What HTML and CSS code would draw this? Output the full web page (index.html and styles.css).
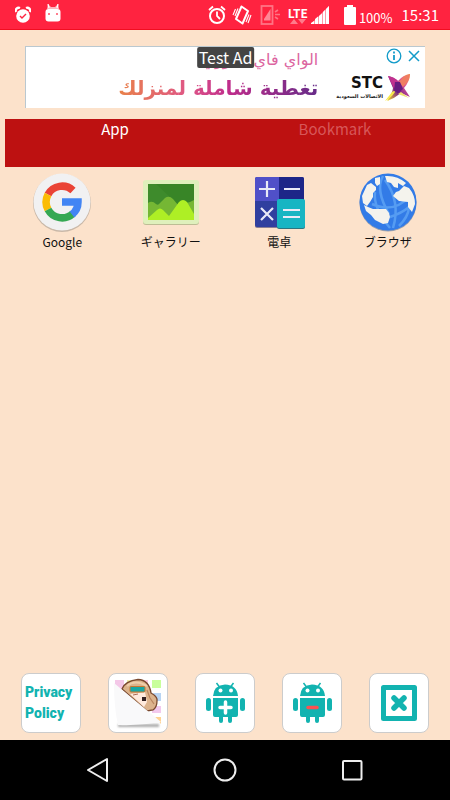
FILE: index.html
```html
<!DOCTYPE html>
<html lang="ja">
<head>
<meta charset="utf-8">
<meta name="viewport" content="width=device-width, initial-scale=1">
<title>Launcher</title>
<link rel="stylesheet" href="styles.css">
</head>
<body>
<header class="status">
  <svg class="s-alarm" viewBox="0 0 16 18" width="16" height="18"><circle cx="8" cy="10" r="6.8" fill="#fff"/><path d="M1 6 A3 3 0 0 1 5 2M15 6 A3 3 0 0 0 11 2" stroke="#fff" stroke-width="2.4" fill="none"/><path d="M5 10l2 2 4-4" stroke="#ff2340" stroke-width="1.4" fill="none"/></svg>
  <svg class="s-cat" viewBox="0 0 16 18" width="16" height="18"><path d="M2 5L3 0l3 3h4l3-3 1 5z" fill="#ffb3bd"/><path d="M3 0l1 4M13 0l-1 4" stroke="#fff" stroke-width="1.2"/><rect x=".5" y="5" width="15" height="12.5" rx="3" fill="#fff"/><path d="M3 10h2M11 10h2" stroke="#ff5268" stroke-width="1.6"/></svg>
  <div class="status-right">
    <svg class="s-ring" viewBox="0 0 18 20" width="18" height="20" fill="none" stroke="#fff"><circle cx="9" cy="11" r="7" stroke-width="2"/><path d="M9 6.5V11l3 3M1 5l4-3.500M17 5l-4-3.500" stroke-width="1.8"/></svg>
    <svg class="s-vibrate" viewBox="0 0 20 20" width="20" height="20" fill="none" stroke="#fff"><path d="M9.500 1.500l6.500 4.500-5.500 12.500L4 14z" stroke-width="2" stroke-linejoin="round"/><path d="M3.500 4L1 10M6 3.500L3 11M19 10l-3 8M17 9.500l-3 7.500" stroke-width="1.100"/></svg>
    <svg class="s-phone" viewBox="0 0 20 20" width="20" height="20" fill="none" stroke="#ff7384"><rect x="1.500" y="1" width="11" height="18" stroke-width="1.800"/><path d="M4 15.500V14L10.500 4v11.500z" fill="#ff8795" stroke="none"/><path d="M15 7l3-2M15 9.500h5M15 12l3 2" stroke-width="1.600"/></svg>
    <div class="lte"><span>LTE</span><svg viewBox="0 0 16 5" width="16" height="5" fill="#ff7b8b"><path d="M0 5l4-5 4 5zM8 0h8l-4 5z"/></svg></div>
    <svg class="s-signal" viewBox="0 0 18 18" width="18" height="18"><path d="M0 18L18 0v18z" fill="#ff9aa7"/><path d="M0 18v-1l3-2v3zM4 18v-5l3-2.500V18zM8 18v-8l3-2.500V18zM12 18V6l2-2v14zM15 18V3l3-3v18z" fill="#fff"/></svg>
    <svg class="s-battery" viewBox="0 0 12 20" width="12" height="20" fill="#fff"><path d="M3 0h6v2h2q1 0 1 1v16q0 1-1 1H1q-1 0-1-1V3q0-1 1-1h2z"/></svg>
    <span class="percent">100%</span>
    <time class="clock">15:31</time>
  </div>
</header>

<main class="main">
  <section class="ad" aria-label="Ad">
    <div class="ad-copy" lang="ar" dir="rtl">
      <p class="ad-top">الواي فاي الفوري</p>
      <p class="ad-bottom">تغطية شاملة لمنزلك</p>
    </div>
    <div class="brand">
      <div class="brand-text"><strong>STC</strong><small lang="ar" dir="rtl">الاتصالات السعودية</small></div>
      <svg viewBox="0 0 32 34" width="32" height="34">
        <defs>
          <linearGradient id="flare" x1="1" y1="0" x2="0" y2="1"><stop offset="0" stop-color="#f7a53d"/><stop offset=".3" stop-color="#e0559a"/><stop offset=".6" stop-color="#782285"/><stop offset="1" stop-color="#f8e326"/></linearGradient>
          <filter id="soft" x="-30%" y="-30%" width="160%" height="160%"><feGaussianBlur stdDeviation=".7"/></filter>
        </defs>
        <g filter="url(#soft)"><path d="M5 6q6 1 10 5 5-6 12-7 0 7-6 14l6 9-9-4q-6 5-14 8 5-6 6-13z" fill="url(#flare)"/><path d="M5 6q6 1 10 5l-4 8z" fill="#c0308f"/><path d="M13 20q-3 7-11 11l7-9z" fill="#f6e94b"/><path d="M16 12q5-7 11-8-1 8-7 13z" fill="#ef7d63"/><path d="M12 12l5 0 3 7-5 4-4-2z" fill="#661d80"/><path d="M18 22l8 6-11-4z" fill="#efdf6e"/></g>
      </svg>
    </div>
    <span class="ad-badge">Test Ad</span>
    <div class="ad-tools">
      <button aria-label="Ad information"><svg viewBox="0 0 16 16" width="16" height="16" fill="none" stroke="#129bc9"><circle cx="8" cy="8" r="6.800" stroke-width="1.300"/><path d="M8 7v5M8 3.500v2" stroke-width="1.800"/></svg></button>
      <button aria-label="Close ad"><svg viewBox="0 0 16 16" width="16" height="16" fill="none" stroke="#129bc9"><path d="M3 3l10 10M13 3L3 13" stroke-width="1.500"/></svg></button>
    </div>
  </section>

  <nav class="tabs">
    <button class="tab tab-active">App</button>
    <button class="tab">Bookmark</button>
  </nav>

  <section class="apps">
    <a class="app" href="#google">
      <svg viewBox="0 0 60 60" width="60" height="60"><circle cx="30" cy="31" r="29" fill="#c9b8a8"/><circle cx="30" cy="30" r="28.500" fill="#f1f1f2"/>
        <g fill="none" stroke-width="7.500"><path d="M41 18.500A16 16 0 0 0 16 22.500" stroke="#ea4335"/><path d="M16 22.500a16 16 0 0 0 0 15" stroke="#fbbc05"/><path d="M16 37.500A16 16 0 0 0 41 41.500" stroke="#34a853"/><path d="M40 42.500A16 16 0 0 0 46 30H30" stroke="#4285f4" stroke-linejoin="miter"/></g></svg>
      <span>Google</span>
    </a>
    <a class="app" href="#gallery">
      <svg viewBox="0 0 60 60" width="60" height="60"><rect x="2" y="9" width="56" height="44" rx="3" fill="#bdbd95"/><rect x="2" y="8" width="56" height="44" rx="3" fill="#dff0bc"/><path d="M7 12h46v36H7z" fill="#388527"/><path d="M7 12h8l38 36H7z" fill="#438f30" opacity=".6"/><path d="M7 31q4-3 8 1 2 2 4-1l5-5q4-3 8 1l5 6 12-3 4-2v20H7z" fill="#75b734"/><path d="M7 48v-2l9-8q3-3 6 0l6 6 10-14q4-4 8 0l7 12v6z" fill="#aeef25"/></svg>
      <span>ギャラリー</span>
    </a>
    <a class="app" href="#calculator">
      <svg viewBox="0 0 60 60" width="60" height="60"><rect x="6" y="6" width="49" height="50" rx="2" fill="#8b7e93"/><rect x="6" y="5" width="49" height="50" rx="2" fill="#303f9f"/><path d="M30 5h23q2 0 2 2v22H30z" fill="#1d2688"/><path d="M8 5h22v24H6V7q0-2 2-2z" fill="#5050c8"/><rect x="28" y="28" width="28" height="29" rx="2" fill="#2c757f"/><rect x="28" y="27" width="28" height="29" rx="2" fill="#17b5c3"/><g fill="none" stroke="#e9eaf7" stroke-width="2.200"><path d="M10 17h16M18 9v16M35 17h16M12 36l12 12M24 36L12 48M34 38h17M34 45h17"/></g></svg>
      <span>電卓</span>
    </a>
    <a class="app" href="#browser">
      <svg viewBox="0 0 60 60" width="60" height="60"><circle cx="30" cy="31" r="28.500" fill="#9aa0ad"/><circle cx="30" cy="30" r="28.500" fill="#327be7"/><g fill="none" stroke="#559cf2" stroke-width="2.500"><path d="M17 20q-2 16 15 36M25 4q-8 14 6 38M27 8q16 22 8 48M14 32q22 10 38-8M41 54q9-9 10-18M32 45q12-4 19-10"/></g><g fill="#f4f3ed"><path d="M5 31L4 24l5-11 4-2 5 4v3l-3 3v4l-3 5-3 4z"/><path d="M17 6l5-1v7l-3 2-2-3zM27 4q12-1 21 7l-3 3-5-3v5l-4-1-3-4-4-1zM41 19l5-5 5 2q6 7 6 16l-3 8-4-5v-5l-9-1-6-5 3-4z"/><path d="M6 33l4 2 5 2h13l3 4 1 4-2 6-5 1-8-4-4-5-5-4z"/></g></svg>
      <span>ブラウザ</span>
    </a>
  </section>

  <footer class="actions">
    <button class="action policy">Privacy<br>Policy</button>
    <button class="action" aria-label="Change wallpaper">
      <svg viewBox="0 0 58 58" width="58" height="58"><path d="M6 6h9v10H6z" fill="#f4c8e8"/><path d="M18 6h8v3h-8z" fill="#f1edab"/><path d="M30 6h9v4h-9z" fill="#f9c8dd"/><path d="M43 6h9v8h-9z" fill="#c9ff9c"/><path d="M44 19h8v8h-8z" fill="#b9d4f2"/><path d="M43 32h9v7h-9z" fill="#f2c9ed"/><path d="M46 43h6v7z" fill="#ffd293"/>
        <path d="M13 15q3-8 16-9.500Q40 6 42 19q7 4 6 8 0 6-4 9l-6 1z" fill="#dcb38c" stroke="#79482e" stroke-width="1.300"/><path d="M21 20l15-2 2 10-3 5z" fill="#ffeadd"/><path d="M18 12q8-7 20 0" fill="none" stroke="#f0cda9" stroke-width="2"/><rect x="21" y="12.500" width="15" height="5.500" rx="1" fill="#18a7a3" stroke="#c77830"/><path d="M38 16l3 8 4 6" stroke="#b9855f" stroke-width="1.200" fill="none"/><path d="M33 23h4v4h-4z" fill="#322"/><path d="M24 21l5-1" stroke="#a96951"/>
        <filter id="paper" x="-10%" y="-100%" width="120%" height="300%"><feGaussianBlur stdDeviation="1.300"/></filter><path d="M9 50h41v3H9z" fill="#aaa" filter="url(#paper)"/><path d="M5 9l47 39q-22 4-43 3Q5 34 5 9z" fill="#f9f9fa"/></svg>
    </button>
    <button class="action" aria-label="Add app">
      <svg viewBox="0 0 58 58" width="58" height="58" fill="#12b3b0"><path d="M17 22q1-11 12-11.500Q41 11 42 22z"/><path d="M20.500 9l3 4M37.500 9l-3 4" stroke="#12b3b0" stroke-width="1.500"/><path d="M17 24h25v17q0 2-2 2h-4v4q0 2-2 2t-2-2v-4h-5v4q0 2-2 2t-2-2v-4h-4q-2 0-2-2z"/><rect x="10" y="24" width="5" height="13" rx="2.500"/><rect x="44" y="24" width="5" height="13" rx="2.500"/><circle cx="24.500" cy="16.500" r="2" fill="#fff"/><circle cx="35" cy="16.500" r="2" fill="#fff"/><path d="M29.500 28v11M24 33.500h11" stroke="#fff" stroke-width="3.500" stroke-linecap="round"/></svg>
    </button>
    <button class="action" aria-label="Remove app">
      <svg viewBox="0 0 58 58" width="58" height="58" fill="#12b3b0"><path d="M17 22q1-11 12-11.500Q41 11 42 22z"/><path d="M20.500 9l3 4M37.500 9l-3 4" stroke="#12b3b0" stroke-width="1.500"/><path d="M17 24h25v17q0 2-2 2h-4v4q0 2-2 2t-2-2v-4h-5v4q0 2-2 2t-2-2v-4h-4q-2 0-2-2z"/><rect x="10" y="24" width="5" height="13" rx="2.500"/><rect x="44" y="24" width="5" height="13" rx="2.500"/><circle cx="24.500" cy="16.500" r="2" fill="#fff"/><circle cx="35" cy="16.500" r="2" fill="#fff"/><path d="M25 33.500h9" stroke="#fa5252" stroke-width="3.500" stroke-linecap="round"/></svg>
    </button>
    <button class="action" aria-label="Close">
      <svg viewBox="0 0 58 58" width="58" height="58" fill="none" stroke="#12b3b0"><rect x="13.500" y="13.500" width="31" height="31" stroke-width="5" stroke-linejoin="round"/><path d="M24 24l10 10M34 24L24 34" stroke-width="5.500" stroke-linecap="round"/></svg>
    </button>
  </footer>
</main>

<nav class="system">
  <button aria-label="Back"><svg viewBox="0 0 28 28" width="28" height="28"><path d="M23 3v22L4 14z"/></svg></button>
  <button aria-label="Home"><svg viewBox="0 0 28 28" width="28" height="28"><circle cx="14" cy="14" r="10.500"/></svg></button>
  <button aria-label="Recent apps"><svg viewBox="0 0 28 28" width="28" height="28"><rect x="5" y="5" width="18.500" height="18.500" rx="1"/></svg></button>
</nav>
</body>
</html>
```
FILE: styles.css
```css
* {
  box-sizing: border-box;
}

body {
  margin: 0;
  min-height: 100vh;
  display: flex;
  flex-direction: column;
  background: #fce2cb;
  font-family: "Noto Sans CJK JP", "Noto Sans", sans-serif;
}

button {
  margin: 0;
  padding: 0;
  border: 0;
  background: none;
  font: inherit;
  color: inherit;
}

svg {
  display: block;
  flex: none;
}

p {
  margin: 0;
}

.status {
  display: flex;
  align-items: center;
  gap: 14px;
  height: 30px;
  padding: 0 11px 0 15px;
  background: #ff2340;
  border-bottom: 1px solid #f20d20;
  color: #fff;
}

.s-cat {
  margin-bottom: 3px;
}

.status-right {
  display: flex;
  align-items: center;
  margin-left: auto;
  gap: 3px;
}

.s-ring {
  margin-right: 3px;
}

.s-vibrate,
.s-phone {
  margin-right: 5px;
}

.s-signal {
  margin-right: 12px;
}

.lte {
  display: flex;
  flex-direction: column;
  align-items: center;
  font-size: 12px;
  line-height: 13px;
  font-weight: 700;
}

.percent {
  padding-top: 6px;
  font-size: 13px;
  line-height: 16px;
}

.clock {
  margin-left: 6px;
  font-size: 15px;
  line-height: 20px;
}

.main {
  flex: 1;
  display: flex;
  flex-direction: column;
  padding: 16px 5px 7px;
}

.ad {
  position: relative;
  display: flex;
  justify-content: flex-end;
  align-items: flex-end;
  gap: 18px;
  height: 62px;
  margin: 0 20px;
  padding: 0 10px 4px 0;
  background: #fff;
  border-top: 1px solid #bac8d0;
  border-left: 1px solid #bac8d0;
}

.ad-copy {
  font-family: "DejaVu Sans", sans-serif;
  white-space: nowrap;
}

.ad-top {
  font-size: 16px;
  line-height: 24px;
  color: #dc659f;
}

.ad-bottom {
  font-size: 20px;
  line-height: 32px;
  font-weight: bold;
  color: transparent;
  background: linear-gradient(90deg, #e98249, #df5686 35%, #c02d8b 55%, #662b88);
  background-clip: text;
}

.brand {
  display: flex;
  align-items: center;
}

.brand-text {
  display: flex;
  flex-direction: column;
  align-items: flex-end;
  color: #111;
}

.brand-text strong {
  font: bold 15px/18px "DejaVu Sans", sans-serif;
}

.brand-text small {
  font: bold 5px/8px "DejaVu Sans", sans-serif;
  white-space: nowrap;
}

.ad-badge {
  position: absolute;
  top: 0;
  left: 50%;
  transform: translateX(-50%);
  padding: 0 2px;
  border-radius: 2px;
  background: #444;
  color: #fff;
  font-size: 16px;
  line-height: 21px;
  white-space: nowrap;
}

.ad-tools {
  position: absolute;
  top: 1px;
  right: 3px;
  display: flex;
  gap: 4px;
}

.tabs {
  display: flex;
  height: 48px;
  margin-top: 11px;
  background: #bd1111;
}

.tab {
  flex: 1;
  display: flex;
  justify-content: center;
  font-size: 15px;
  line-height: 20px;
  color: #d75759;
}

.tab-active {
  color: #fff;
}

.apps {
  display: grid;
  grid-template-columns: repeat(4, 1fr);
  padding: 5px 3px 0;
}

.app {
  display: flex;
  flex-direction: column;
  align-items: center;
  color: #111;
  font-size: 12px;
  line-height: 20px;
  text-decoration: none;
}

.actions {
  display: flex;
  justify-content: space-between;
  margin-top: auto;
  padding: 0 16px;
}

.action {
  display: flex;
  align-items: center;
  justify-content: center;
  width: 60px;
  height: 60px;
  background: #fff;
  border: 1px solid #ccc;
  border-radius: 8px;
}

.policy {
  justify-content: flex-start;
  padding-left: 3px;
  font: 900 14px/21px Roboto, sans-serif;
  text-align: left;
  color: #12b3b0;
}

.system {
  display: flex;
  justify-content: space-between;
  align-items: center;
  height: 60px;
  padding: 0 18.6%;
  background: #000;
}

.system svg {
  fill: none;
  stroke: #eee;
  stroke-width: 2;
  stroke-linejoin: round;
}
```
